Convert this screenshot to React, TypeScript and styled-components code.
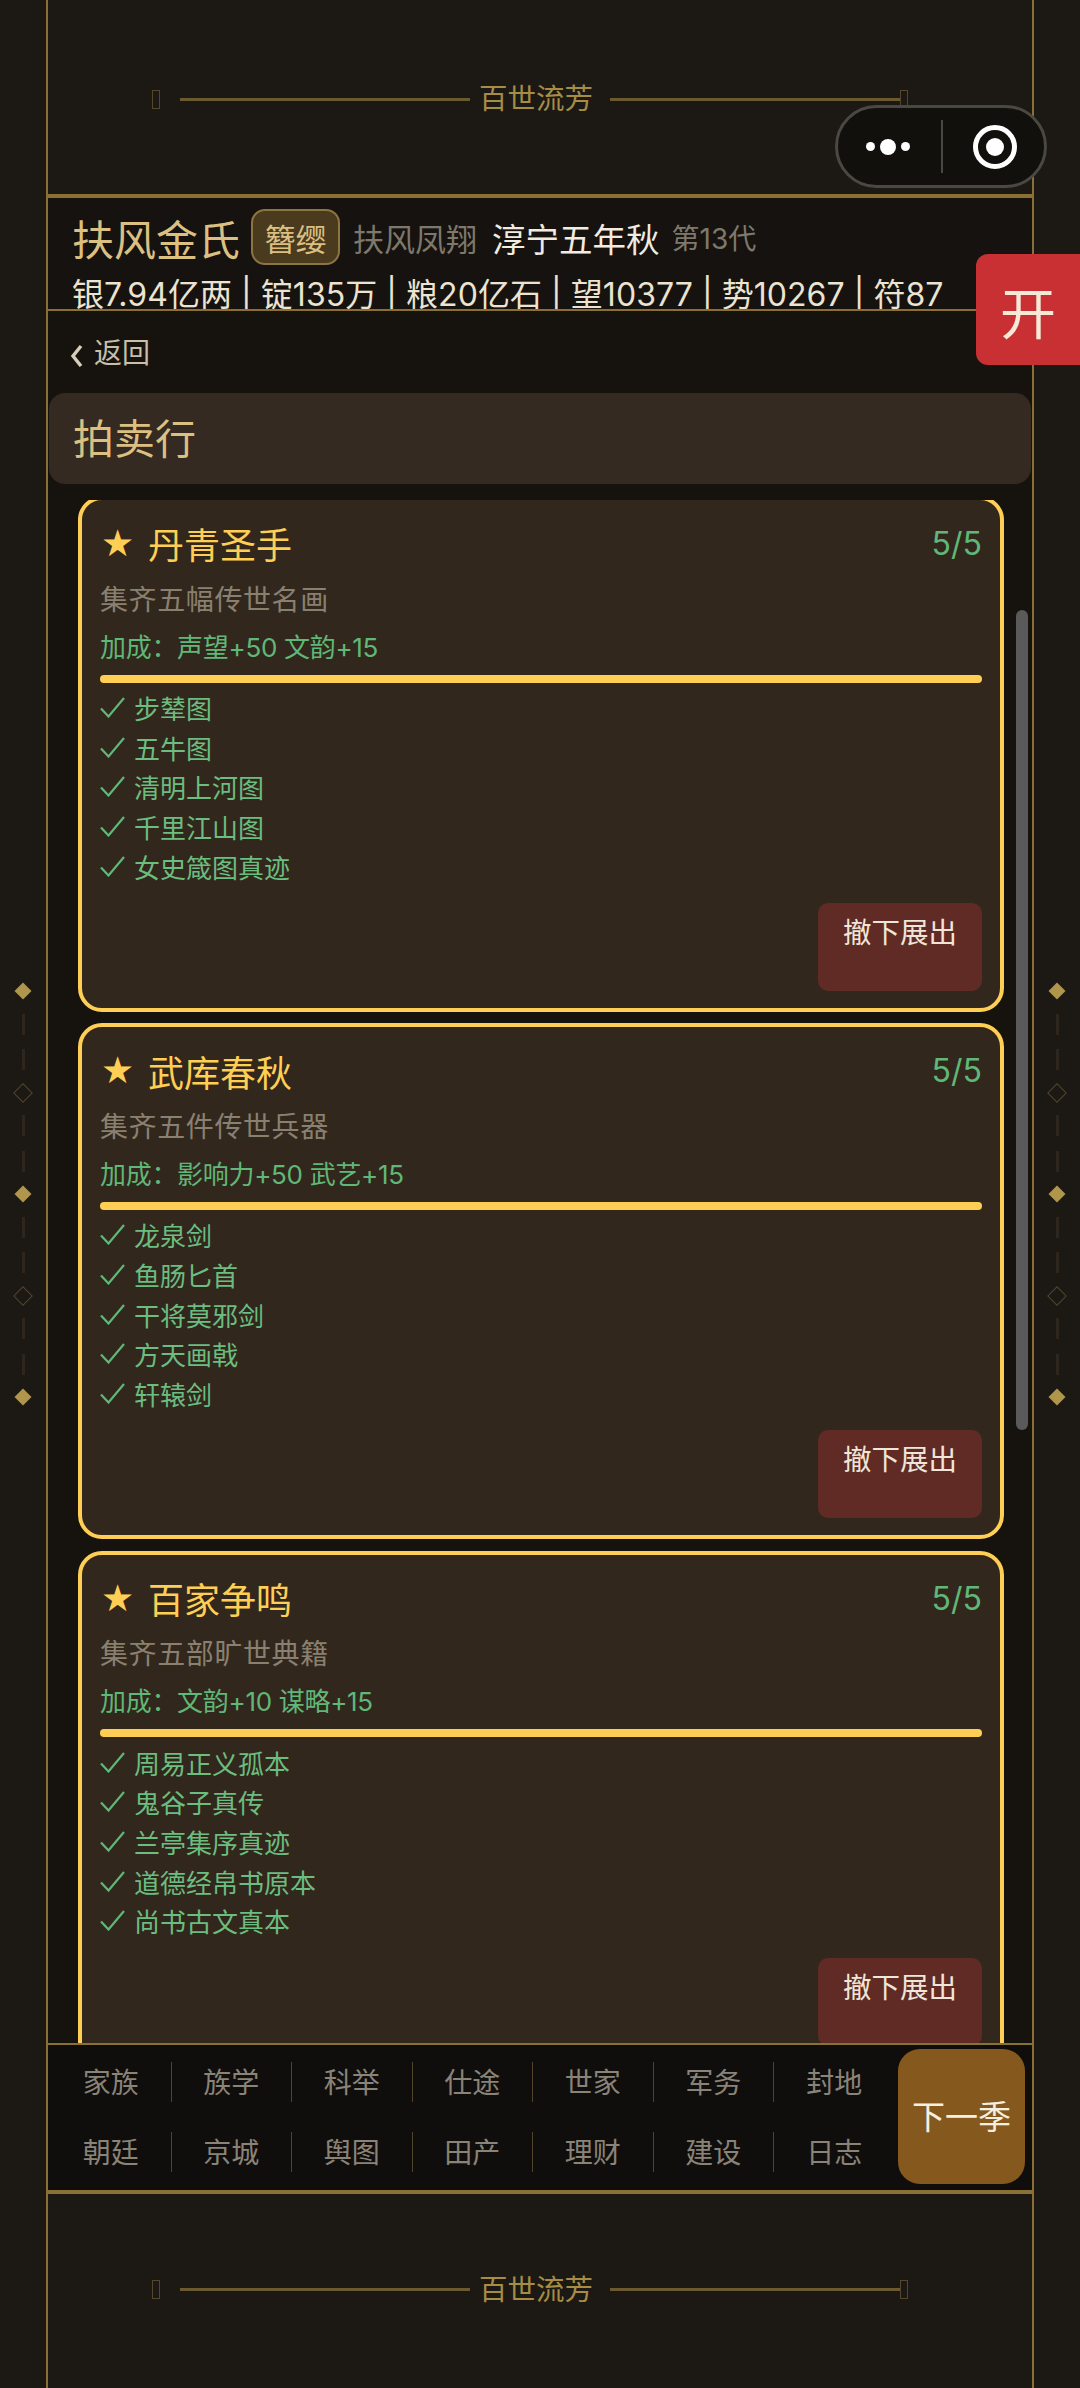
import React from "react";
import styled, { createGlobalStyle } from "styled-components";

interface Collection {
  name: string;
  desc: string;
  bonus: string;
  items: string[];
}

const collections: Collection[] = [
  {
    name: "丹青圣手",
    desc: "集齐五幅传世名画",
    bonus: "加成：声望+50 文韵+15",
    items: ["步辇图", "五牛图", "清明上河图", "千里江山图", "女史箴图真迹"],
  },
  {
    name: "武库春秋",
    desc: "集齐五件传世兵器",
    bonus: "加成：影响力+50 武艺+15",
    items: ["龙泉剑", "鱼肠匕首", "干将莫邪剑", "方天画戟", "轩辕剑"],
  },
  {
    name: "百家争鸣",
    desc: "集齐五部旷世典籍",
    bonus: "加成：文韵+10 谋略+15",
    items: ["周易正义孤本", "鬼谷子真传", "兰亭集序真迹", "道德经帛书原本", "尚书古文真本"],
  },
];

const navItems = [
  "家族", "族学", "科举", "仕途", "世家", "军务", "封地",
  "朝廷", "京城", "舆图", "田产", "理财", "建设", "日志",
];

const railPattern = [true, false, true, false, true];

const Ornament: React.FC = () => (
  <OrnamentRow>
    <Tofu />
    <OrnamentLine />
    <OrnamentText>百世流芳</OrnamentText>
    <OrnamentLine />
    <TofuEnd />
  </OrnamentRow>
);

const SideRail: React.FC = () => (
  <Rail>
    {railPattern.map((filled, i) => (
      <React.Fragment key={i}>
        <Diamond $filled={filled} />
        {i < railPattern.length - 1 && (
          <>
            <Dash />
            <Dash />
          </>
        )}
      </React.Fragment>
    ))}
  </Rail>
);

const CollectionCard: React.FC<{ data: Collection }> = ({ data }) => (
  <Card>
    <CardHead>
      <CardTitle>
        <Star>★</Star>
        {data.name}
      </CardTitle>
      <CardCount>5/5</CardCount>
    </CardHead>
    <CardDesc>{data.desc}</CardDesc>
    <CardBonus>{data.bonus}</CardBonus>
    <ProgressBar />
    <ItemList>
      {data.items.map((item) => (
        <Item key={item}>
          <svg width="25" height="21" viewBox="0 0 25 21" fill="none">
            <path d="M1 11.5 L8.5 19.5 L24 1" stroke="#5fb878" strokeWidth="2.2" />
          </svg>
          {item}
        </Item>
      ))}
    </ItemList>
    <CardFoot>
      <WithdrawButton>撤下展出</WithdrawButton>
    </CardFoot>
  </Card>
);

export default function App() {
  return (
    <>
      <GlobalStyle />
      <Page>
        <SideRail />
        <Frame>
          <TopBar>
            <Ornament />
          </TopBar>
          <StatusHeader>
            <TitleRow>
              <ClanName>扶风金氏</ClanName>
              <RankBadge>簪缨</RankBadge>
              <Region>扶风凤翔</Region>
              <Season>淳宁五年秋</Season>
              <Generation>第13代</Generation>
            </TitleRow>
            <Stats>银7.94亿两 | 锭135万 | 粮20亿石 | 望10377 | 势10267 | 符87</Stats>
          </StatusHeader>
          <BackRow>
            <BackIcon width="14" height="24" viewBox="0 0 14 24" fill="none">
              <path d="M11 3 L3 13 L11 23" stroke="#d8cdb8" strokeWidth="3.4" />
            </BackIcon>
            返回
          </BackRow>
          <PageTitle>拍卖行</PageTitle>
          <ListViewport>
            <CardScroll>
              {collections.map((c) => (
                <CollectionCard key={c.name} data={c} />
              ))}
            </CardScroll>
            <ScrollThumb />
          </ListViewport>
          <BottomNav>
            <NavGrid>
              {navItems.map((label, i) => (
                <NavItem key={label} $last={i % 7 === 6}>
                  {label}
                </NavItem>
              ))}
            </NavGrid>
            <NextButton>下一季</NextButton>
          </BottomNav>
          <FootBar>
            <Ornament />
          </FootBar>
        </Frame>
        <SideRail />
        <Capsule>
          <MoreDots>
            <Dot $size={9} />
            <Dot $size={16} />
            <Dot $size={9} />
          </MoreDots>
          <CapsuleDivider />
          <CloseRing>
            <CloseCore />
          </CloseRing>
        </Capsule>
        <OpenTab>开</OpenTab>
      </Page>
    </>
  );
}

const GlobalStyle = createGlobalStyle`
  html, body {
    margin: 0;
    padding: 0;
    background: #1c1814;
  }
  * {
    box-sizing: border-box;
  }
`;

const Page = styled.div`
  position: relative;
  width: 1080px;
  height: 2388px;
  display: flex;
  overflow: hidden;
  background: #1c1814;
  font-family: Inter, "Noto Sans CJK SC", sans-serif;
`;

const Rail = styled.div`
  width: 46px;
  flex: none;
  display: flex;
  flex-direction: column;
  align-items: center;
  justify-content: center;
  gap: 14.5px;
`;

const Diamond = styled.span<{ $filled: boolean }>`
  width: 16px;
  height: 16px;
  display: flex;
  align-items: center;
  justify-content: center;

  &::before {
    content: "";
    flex: none;
    width: 12px;
    height: 12px;
    transform: rotate(45deg);
    background: ${(p) => (p.$filled ? "#b0964c" : "transparent")};
    border: ${(p) => (p.$filled ? "none" : "1px solid #51452c")};
  }
`;

const Dash = styled.span`
  width: 3px;
  height: 21px;
  background: #2e261c;
`;

const Frame = styled.div`
  width: 988px;
  flex: none;
  display: flex;
  flex-direction: column;
  border-left: 2px solid #8a7034;
  border-right: 2px solid #8a7034;
  background: #16130f;
`;

const TopBar = styled.div`
  height: 198px;
  flex: none;
  display: flex;
  align-items: center;
  padding-top: 4px;
  background: #1c1814;
  border-bottom: 4px solid #8a7034;
`;

const FootBar = styled.div`
  height: 194px;
  flex: none;
  display: flex;
  align-items: center;
  padding-bottom: 3px;
  background: #1c1814;
`;

const OrnamentRow = styled.div`
  display: flex;
  align-items: center;
  padding-left: 104px;
`;

const Tofu = styled.span`
  width: 8px;
  height: 19px;
  margin-right: 20px;
  border: 1px solid #54462a;
`;

const TofuEnd = styled(Tofu)`
  margin-right: 0;
`;

const OrnamentLine = styled.span`
  width: 290px;
  height: 3px;
  background: #6b5a30;
`;

const OrnamentText = styled.span`
  margin: 0 17px 0 9px;
  font-size: 28.5px;
  line-height: 40px;
  color: #a68c45;
`;

const StatusHeader = styled.div`
  height: 113px;
  flex: none;
  padding: 9px 0 0 24px;
  overflow: hidden;
  background: #15120f;
  border-bottom: 2px solid #8a7034;
`;

const TitleRow = styled.div`
  display: flex;
  align-items: center;
  height: 60px;
  margin-bottom: 6px;
`;

const ClanName = styled.span`
  font-size: 42px;
  color: #dcc081;
`;

const RankBadge = styled.span`
  margin-left: 11px;
  width: 89px;
  height: 56px;
  display: flex;
  align-items: center;
  justify-content: center;
  font-size: 31px;
  color: #dcc081;
  background: #4a3a1e;
  border: 2px solid #8d7540;
  border-radius: 14px;
`;

const Region = styled.span`
  margin-left: 13px;
  font-size: 31px;
  color: #7e786c;
`;

const Season = styled.span`
  margin-left: 15px;
  font-size: 33.5px;
  color: #f2ece0;
`;

const Generation = styled.span`
  margin-left: 12px;
  font-size: 28px;
  color: #7e786c;
`;

const Stats = styled.div`
  font-size: 32px;
  line-height: 44px;
  letter-spacing: 0.05px;
  white-space: nowrap;
  color: #ece3d0;
`;

const BackRow = styled.div`
  height: 82px;
  flex: none;
  display: flex;
  align-items: center;
  gap: 10px;
  padding: 0 0 2px 22px;
  font-size: 28px;
  color: #c9bfa9;
`;

const BackIcon = styled.svg`
  margin-top: 7px;
`;

const PageTitle = styled.div`
  height: 91px;
  flex: none;
  margin: 0 1px;
  padding: 0 0 5px 24px;
  display: flex;
  align-items: center;
  font-size: 41px;
  color: #dcc081;
  background: #342a22;
  border-radius: 16px;
`;

const ListViewport = styled.div`
  position: relative;
  flex: 1;
  min-height: 0;
  margin-top: 16px;
  overflow: hidden;
`;

const CardScroll = styled.div`
  display: flex;
  flex-direction: column;
  gap: 11.5px;
  margin: -4px 28px 0 30px;
`;

const ScrollThumb = styled.div`
  position: absolute;
  top: 110px;
  right: 4px;
  width: 12px;
  height: 820px;
  border-radius: 6px;
  background: #5a5a5a;
`;

const Card = styled.div`
  flex: none;
  padding: 18px 18px 17px;
  background: #32271c;
  border: 4px solid #ffcf55;
  border-radius: 24px;
`;

const CardHead = styled.div`
  display: flex;
  align-items: center;
  justify-content: space-between;
  height: 50.5px;
`;

const CardTitle = styled.div`
  display: flex;
  align-items: center;
  font-size: 36px;
  color: #ffcf55;
`;

const Star = styled.span`
  width: 48px;
  padding-left: 1px;
  font-family: "DejaVu Sans", sans-serif;
  font-size: 37px;
`;

const CardCount = styled.div`
  font-size: 32px;
  color: #5fb878;
`;

const CardDesc = styled.div`
  margin-top: 11px;
  font-size: 28px;
  letter-spacing: 0.6px;
  line-height: 40px;
  color: #8a8070;
`;

const CardBonus = styled.div`
  margin-top: 10px;
  font-size: 26px;
  letter-spacing: -0.3px;
  line-height: 36px;
  color: #5fb878;
`;

const ProgressBar = styled.div`
  margin-top: 9px;
  height: 8px;
  border-radius: 4px;
  background: #ffcf55;
`;

const ItemList = styled.div`
  margin-top: 5px;
`;

const Item = styled.div`
  display: flex;
  align-items: center;
  gap: 9px;
  height: 39.7px;
  font-size: 26px;
  color: #6bbd80;
`;

const CardFoot = styled.div`
  margin-top: 17px;
  display: flex;
  justify-content: flex-end;
`;

const WithdrawButton = styled.div`
  width: 164px;
  height: 88px;
  padding-top: 10px;
  text-align: center;
  font-size: 28.5px;
  line-height: 40px;
  color: #f0e5d8;
  background: #5f2b24;
  border-radius: 10px;
`;

const BottomNav = styled.div`
  height: 151px;
  flex: none;
  display: flex;
  background: #100e0c;
  border-top: 2px solid #8a7034;
  border-bottom: 4px solid #8a7034;
`;

const NavGrid = styled.div`
  width: 848px;
  padding: 17px 0 0 3px;
  display: grid;
  grid-template-columns: repeat(7, 120.5px);
  grid-auto-rows: 40px;
  row-gap: 30px;
`;

const NavItem = styled.div<{ $last: boolean }>`
  display: flex;
  align-items: center;
  justify-content: center;
  padding-bottom: 3px;
  font-size: 28px;
  color: #8a8378;
  border-right: ${(p) => (p.$last ? "none" : "1px solid #4f4428")};
`;

const NextButton = styled.div`
  margin: 4px 0 0 2px;
  width: 127px;
  height: 135px;
  padding-bottom: 4px;
  display: flex;
  align-items: center;
  justify-content: center;
  font-size: 33px;
  color: #f6eee0;
  background: #85591d;
  border-radius: 22px;
`;

const Capsule = styled.div`
  position: absolute;
  top: 105px;
  left: 835px;
  width: 212px;
  height: 83px;
  display: flex;
  align-items: center;
  background: #12100c;
  border: 3px solid #4a4842;
  border-radius: 42px;
`;

const MoreDots = styled.div`
  width: 103px;
  display: flex;
  align-items: center;
  justify-content: center;
  gap: 5px;
  padding-right: 4px;
`;

const Dot = styled.span<{ $size: number }>`
  width: ${(p) => p.$size}px;
  height: ${(p) => p.$size}px;
  border-radius: 50%;
  background: #fff;
`;

const CapsuleDivider = styled.span`
  width: 2px;
  height: 53px;
  background: #4a4842;
`;

const CloseRing = styled.span`
  margin-left: 30px;
  width: 44px;
  height: 44px;
  display: flex;
  align-items: center;
  justify-content: center;
  border: 5px solid #fff;
  border-radius: 50%;
`;

const CloseCore = styled.span`
  width: 18px;
  height: 18px;
  border-radius: 50%;
  background: #fff;
`;

const OpenTab = styled.div`
  position: absolute;
  top: 254px;
  left: 976px;
  width: 104px;
  height: 111px;
  display: flex;
  align-items: center;
  justify-content: center;
  font-size: 56px;
  color: #f5ead8;
  background: #c93034;
  border-radius: 12px 0 0 12px;
`;
